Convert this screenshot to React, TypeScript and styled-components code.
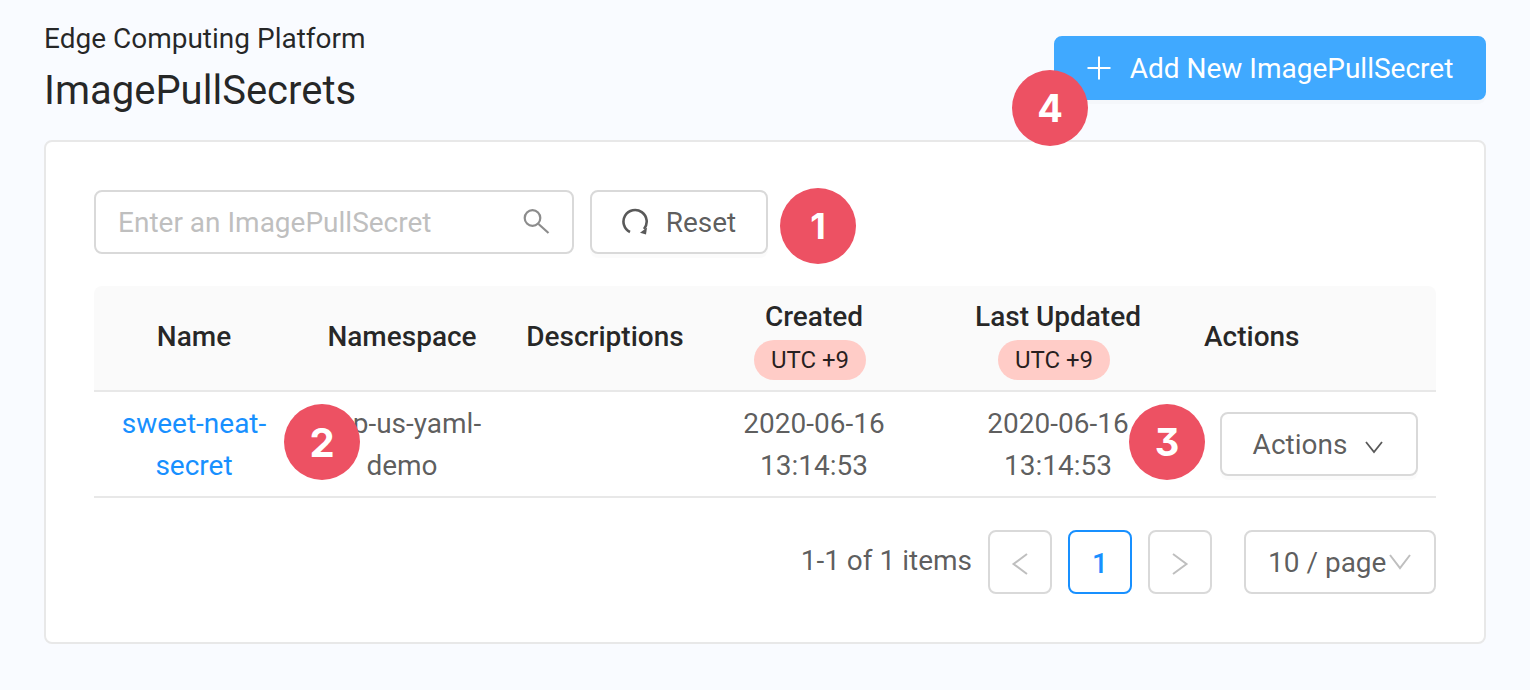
import React from 'react';
import styled, { createGlobalStyle } from 'styled-components';

const GlobalStyle = createGlobalStyle`
  html, body {
    margin: 0;
    padding: 0;
    background: #f9fbff;
    font-family: Roboto, "Liberation Sans", sans-serif;
  }
  * { box-sizing: border-box; }
`;

const Page = styled.div`
  position: relative;
  height: 690px;
  padding: 0 44px;
  overflow: hidden;
`;

const Header = styled.header`
  display: flex;
  justify-content: space-between;
  align-items: flex-start;
  height: 140px;
`;

const Titles = styled.div`
  padding-top: 17px;
`;

const Crumb = styled.div`
  font-size: 28px;
  line-height: 44px;
  color: rgba(0, 0, 0, 0.85);
`;

const Title = styled.h1`
  margin: 2px 0 0;
  font-size: 40px;
  line-height: 56px;
  font-weight: 400;
  color: rgba(0, 0, 0, 0.85);
`;

const Button = styled.button<{ $primary?: boolean }>`
  display: inline-flex;
  align-items: center;
  justify-content: center;
  height: 64px;
  border-radius: 8px;
  border: 2px solid ${(p) => (p.$primary ? '#40a9ff' : '#d9d9d9')};
  background: ${(p) => (p.$primary ? '#40a9ff' : '#fff')};
  color: ${(p) => (p.$primary ? '#fff' : 'rgba(0, 0, 0, 0.65)')};
  box-shadow: 0 4px 0 rgba(0, 0, 0, 0.015);
  font-family: inherit;
  font-size: 28px;
  padding: 0;
`;

const AddButton = styled(Button)`
  width: 432px;
  margin-top: 36px;
  gap: 19px;
`;

const ResetButton = styled(Button)`
  width: 178px;
  gap: 16px;
`;

const ActionsButton = styled(Button)`
  width: 198px;
  margin-left: 16px;
  gap: 18px;

  svg {
    margin: 5px 2px 0 0;
  }
`;

const Card = styled.section`
  height: 504px;
  padding: 48px;
  background: #fff;
  border: 2px solid #e8e8e8;
  border-radius: 8px;
`;

const Toolbar = styled.div`
  display: flex;
  gap: 16px;
  margin-bottom: 32px;
`;

const SearchBox = styled.div`
  display: flex;
  align-items: center;
  justify-content: space-between;
  width: 480px;
  height: 64px;
  padding: 0 22px;
  border: 2px solid #d9d9d9;
  border-radius: 8px;
  font-size: 28px;
  color: #bfbfbf;
`;

const Row = styled.div<{ $head?: boolean }>`
  display: grid;
  grid-template-columns: 200px 216px 190px 228px 260px 248px;
  align-items: center;
  height: 106px;
  padding: ${(p) => (p.$head ? '0 0 2px' : '0')};
  border-bottom: 2px solid #e8e8e8;
  background: ${(p) => (p.$head ? '#fafafa' : '#fff')};
  border-radius: ${(p) => (p.$head ? '8px 8px 0 0' : '0')};
`;

const HeadCell = styled.div<{ $left?: boolean }>`
  display: flex;
  flex-direction: column;
  align-items: ${(p) => (p.$left ? 'flex-start' : 'center')};
  padding: 0 16px;
  font-size: 28px;
  font-weight: 500;
  line-height: 42px;
  color: rgba(0, 0, 0, 0.85);
`;

const Cell = styled.div<{ $link?: boolean }>`
  padding: 1px 16px 0;
  font-size: 28px;
  line-height: 42px;
  text-align: center;
  color: ${(p) => (p.$link ? '#1890ff' : 'rgba(0, 0, 0, 0.65)')};
`;

const ActionCell = styled.div`
  padding-left: 16px;
`;

const Utc = styled.span`
  width: 112px;
  height: 40px;
  margin: 2px 8px -2px 0;
  border-radius: 20px;
  background: #ffccc7;
  font-size: 24px;
  font-weight: 400;
  line-height: 40px;
  text-align: center;
`;

const Pagination = styled.nav`
  display: flex;
  align-items: center;
  justify-content: flex-end;
  gap: 16px;
  margin-top: 32px;
`;

const Total = styled.span`
  margin-bottom: 4px;
  font-size: 28px;
  color: rgba(0, 0, 0, 0.65);
`;

const PageItem = styled.div<{ $active?: boolean }>`
  display: flex;
  align-items: center;
  justify-content: center;
  width: 64px;
  height: 64px;
  padding-top: ${(p) => (p.$active ? '2px' : '4px')};
  border: 2px solid ${(p) => (p.$active ? '#1890ff' : '#d9d9d9')};
  border-radius: 8px;
  font-size: 28px;
  font-weight: ${(p) => (p.$active ? 500 : 400)};
  color: ${(p) => (p.$active ? '#1890ff' : '#bfbfbf')};
`;

const PageSize = styled.div`
  display: flex;
  align-items: center;
  gap: 2px;
  width: 192px;
  height: 64px;
  margin-left: 16px;
  padding-left: 22px;
  border: 2px solid #d9d9d9;
  border-radius: 8px;
  font-size: 28px;
  color: rgba(0, 0, 0, 0.65);
`;

const Marker = styled.div<{ $x: number; $y: number; $size: number }>`
  position: absolute;
  left: ${(p) => p.$x - 38}px;
  top: ${(p) => p.$y - 38}px;
  display: flex;
  align-items: center;
  justify-content: center;
  width: 76px;
  height: 76px;
  border-radius: 50%;
  background: #ed5163;
  color: #fff;
  font-family: Inter, "Liberation Sans", sans-serif;
  font-size: ${(p) => p.$size}px;
  font-feature-settings: "cv09";
  font-weight: 700;
`;

const Icon = ({ size, color, width = 2, children }: { size: number; color: string; width?: number; children: React.ReactNode }) => (
  <svg width={size} height={size} viewBox={`0 0 ${size} ${size}`} fill="none" stroke={color} strokeWidth={width}>
    {children}
  </svg>
);

const markers = [
  { n: 1, x: 818, y: 226, size: 36 },
  { n: 2, x: 322, y: 442, size: 40 },
  { n: 3, x: 1167, y: 442, size: 38 },
  { n: 4, x: 1050, y: 108, size: 38 },
];

export default function App() {
  return (
    <Page>
      <GlobalStyle />
      <Header>
        <Titles>
          <Crumb>Edge Computing Platform</Crumb>
          <Title>ImagePullSecrets</Title>
        </Titles>
        <AddButton $primary>
          <Icon size={24} color="#fff">
            <path d="M12 0.5v23M0.5 12h23" />
          </Icon>
          Add New ImagePullSecret
        </AddButton>
      </Header>
      <Card>
        <Toolbar>
          <SearchBox>
            Enter an ImagePullSecret
            <Icon size={28} color="#8c8c8c" width={2.2}>
              <circle cx="10.5" cy="10" r="7.8" />
              <path d="M16.5 16l10 9" />
            </Icon>
          </SearchBox>
          <ResetButton>
            <Icon size={28} color="#595959" width={2.6}>
              <path d="M8 24A11.6 11.6 0 1 1 22 21" />
              <path d="M25 19.5l-1 7-6-1.8z" fill="#595959" stroke="none" />
            </Icon>
            Reset
          </ResetButton>
        </Toolbar>
        <Row $head>
          <HeadCell>Name</HeadCell>
          <HeadCell>Namespace</HeadCell>
          <HeadCell>Descriptions</HeadCell>
          <HeadCell>
            Created
            <Utc>UTC +9</Utc>
          </HeadCell>
          <HeadCell>
            Last Updated
            <Utc>UTC +9</Utc>
          </HeadCell>
          <HeadCell $left>Actions</HeadCell>
        </Row>
        <Row>
          <Cell $link>sweet-neat-secret</Cell>
          <Cell>sup-us-yaml-demo</Cell>
          <Cell />
          <Cell>2020-06-16 13:14:53</Cell>
          <Cell>2020-06-16 13:14:53</Cell>
          <ActionCell>
            <ActionsButton>
              Actions
              <Icon size={18} color="#595959" width={1.8}>
                <path d="M1 4l8 10 8-10" />
              </Icon>
            </ActionsButton>
          </ActionCell>
        </Row>
        <Pagination>
          <Total>1-1 of 1 items</Total>
          <PageItem>
            <Icon size={22} color="#bfbfbf">
              <path d="M18 1L4.5 11 18 21" />
            </Icon>
          </PageItem>
          <PageItem $active>1</PageItem>
          <PageItem>
            <Icon size={22} color="#bfbfbf">
              <path d="M4 1l13.5 10L4 21" />
            </Icon>
          </PageItem>
          <PageSize>
            10 / page
            <Icon size={24} color="#bfbfbf">
              <path d="M2 5l10 13L22 5" />
            </Icon>
          </PageSize>
        </Pagination>
      </Card>
      {markers.map((m) => (
        <Marker key={m.n} $x={m.x} $y={m.y} $size={m.size}>
          {m.n}
        </Marker>
      ))}
    </Page>
  );
}
